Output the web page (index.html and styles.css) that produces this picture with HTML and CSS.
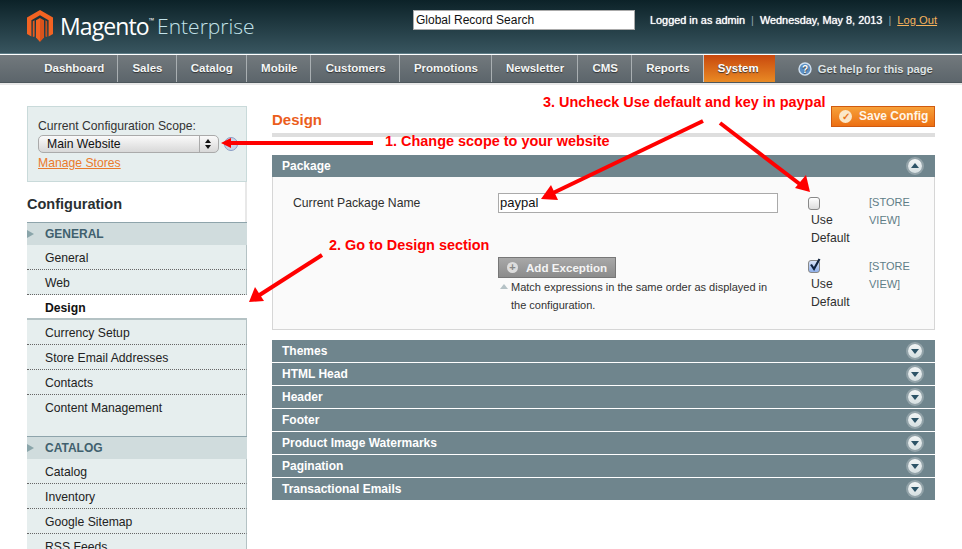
FILE: index.html
```html
<!DOCTYPE html>
<html lang="en">
<head>
    <meta charset="UTF-8">
    <meta name="viewport" content="width=device-width, initial-scale=1.0">
    <link rel="stylesheet" href="styles.css">
    <title>Magento Enterprise - Design Configuration</title>
</head>
<body>

<div id="page">

<header class="header">
    <svg class="logo-mark" width="26" height="32" viewBox="0 0 26 32">
        <path d="M13 0 L26 7.6 V24 L21.6 26.4 V10.2 L13 5.2 L4.4 10.2 V26.4 L0 24 V7.6 Z" fill="#f26322"/>
        <path d="M13 8 L9 10.3 V27.6 L13 32 Z" fill="#f26322"/>
        <path d="M13 8 L17 10.3 V27.6 L13 32 Z" fill="#d9531c"/>
        <path d="M5.8 11.2 L7.6 10.2 V26.6 L5.8 27 Z" fill="#e85a1e"/>
        <path d="M20.2 11.2 L18.4 10.2 V26.6 L20.2 27 Z" fill="#c94c18"/>
    </svg>
    <div class="logo-text"><span class="logo-name">Magento</span><sup class="logo-tm">&trade;</sup><span class="logo-edition">Enterprise</span></div>
    <div class="search-box">Global Record Search</div>
    <div class="user-info">
        <span>Logged in as admin</span>
        <span class="sep">|</span>
        <span>Wednesday, May 8, 2013</span>
        <span class="sep">|</span>
        <a href="#" class="logout">Log Out</a>
    </div>
</header>

<nav class="nav">
    <a href="#" class="nav-item">Dashboard</a>
    <a href="#" class="nav-item">Sales</a>
    <a href="#" class="nav-item">Catalog</a>
    <a href="#" class="nav-item">Mobile</a>
    <a href="#" class="nav-item">Customers</a>
    <a href="#" class="nav-item">Promotions</a>
    <a href="#" class="nav-item">Newsletter</a>
    <a href="#" class="nav-item">CMS</a>
    <a href="#" class="nav-item">Reports</a>
    <a href="#" class="nav-item nav-active">System</a>
    <a href="#" class="nav-help">
        <svg width="14" height="14" viewBox="0 0 14 14">
            <circle cx="7" cy="7" r="6" fill="#5b8fc4" stroke="#cfe0f0" stroke-width="1.4"/>
            <text x="7" y="10.5" text-anchor="middle" class="help-q">?</text>
        </svg>
        Get help for this page
    </a>
</nav>

<div class="content">
    <aside class="sidebar">
        <div class="scope">
            <div class="scope-label">Current Configuration Scope:</div>
            <div class="scope-row">
                <div class="scope-select">
                    <span class="scope-value">Main Website</span>
                    <span class="scope-arrows"></span>
                </div>
                <span class="scope-help"></span>
            </div>
            <a href="#" class="manage-stores">Manage Stores</a>
        </div>
        <h3 class="side-title">Configuration</h3>
        <div class="side-head">GENERAL</div>
        <ul class="side-list">
            <li>General</li>
            <li>Web</li>
            <li class="side-active">Design</li>
            <li>Currency Setup</li>
            <li>Store Email Addresses</li>
            <li>Contacts</li>
            <li class="side-last">Content Management</li>
        </ul>
        <div class="side-head">CATALOG</div>
        <ul class="side-list">
            <li>Catalog</li>
            <li>Inventory</li>
            <li>Google Sitemap</li>
            <li>RSS Feeds</li>
        </ul>
    </aside>

    <main class="main">
        <div class="title-row">
            <h3 class="main-title">Design</h3>
            <button class="save-btn"><span class="save-icon">&#10003;</span>Save Config</button>
        </div>
        <div class="section-head">Package<span class="toggle toggle-up"></span></div>
        <div class="panel">
            <div class="field">
                <div class="field-label">Current Package Name</div>
                <div class="field-value"><div class="text-input">paypal</div></div>
                <div class="field-default"><span class="check"></span>Use<br>Default</div>
                <div class="field-scope">[STORE VIEW]</div>
            </div>
            <div class="field field-second">
                <div class="field-label"></div>
                <div class="field-value">
                    <button class="add-btn"><span class="add-icon">+</span>Add Exception</button>
                    <p class="hint">Match expressions in the same order as displayed in the configuration.</p>
                </div>
                <div class="field-default">
                    <span class="check check-on">
                        <svg width="14" height="14" viewBox="0 0 14 14"><path d="M3 6.5 L6 11 L11.5 1" fill="none" stroke="#10233f" stroke-width="2.2"/></svg>
                    </span>Use<br>Default
                </div>
                <div class="field-scope">[STORE VIEW]</div>
            </div>
        </div>
        <div class="section-list">
            <div class="section-head">Themes<span class="toggle"></span></div>
            <div class="section-head">HTML Head<span class="toggle"></span></div>
            <div class="section-head">Header<span class="toggle"></span></div>
            <div class="section-head">Footer<span class="toggle"></span></div>
            <div class="section-head">Product Image Watermarks<span class="toggle"></span></div>
            <div class="section-head">Pagination<span class="toggle"></span></div>
            <div class="section-head">Transactional Emails<span class="toggle"></span></div>
        </div>
    </main>
</div>

<!-- red notes drawn over the screenshot -->
<svg class="arrows" width="962" height="549" viewBox="0 0 962 549">
    <g fill="none" stroke="#f00" stroke-width="4">
        <path d="M373 143 H228"/>
        <path d="M322 255 L258 296"/>
        <path d="M703 121 L553 193"/>
        <path d="M720 123 L801 185"/>
    </g>
    <g fill="#f00">
        <path d="M221 143 L231 138 V148 Z"/>
        <path d="M249 302 L255 287 L264 301 Z"/>
        <path d="M541 199 L551 185 L558 200 Z"/>
        <path d="M810 192 L795 188 L806 175 Z"/>
    </g>
</svg>
<div class="note note-one">1. Change scope to your website</div>
<div class="note note-two">2. Go to Design section</div>
<div class="note note-three">3. Uncheck Use default and key in paypal</div>

</div>

</body>
</html>
```

FILE: styles.css
```css
html, body {
    margin: 0;
    padding: 0;
}

body {
    font-family: "Liberation Sans", Arial, sans-serif;
    font-size: 12.2px;
    color: #2f2f2f;
    background-color: #fff;
}

#page {
    position: relative;
    height: 549px;
    overflow: hidden;
}

a {
    text-decoration: none;
}

/* header */
.header {
    display: flex;
    align-items: flex-start;
    height: 53px;
    padding-left: 27px;
    border-bottom: 1px solid #5f7d87;
    background: linear-gradient(#0c2228, #38555f);
    color: #fff;
}

.logo-mark {
    flex: none;
    margin-top: 10px;
}

.logo-text {
    display: flex;
    width: 353px;
    margin-left: 7px;
    margin-top: 11px;
    font-family: "Open Sans", sans-serif;
    font-size: 23px;
    line-height: 30px;
}

.logo-name {
    letter-spacing: -0.9px;
}

.logo-tm {
    margin: 0;
    font-size: 7px;
    line-height: 20px;
}

.logo-edition {
    margin-left: 3px;
    color: #c3e3ea;
    font-size: 21px;
    font-weight: 300;
}

.search-box {
    box-sizing: border-box;
    width: 222px;
    height: 20px;
    margin-top: 10px;
    padding-left: 2px;
    background-color: #fff;
    border: 1px solid #aaa;
    color: #111;
    font-size: 12px;
    line-height: 18px;
}

.user-info {
    display: flex;
    margin-top: 13px;
    margin-left: 15px;
    font-size: 10.9px;
    line-height: 14px;
    text-shadow: 0 0 1px #fff;
    white-space: nowrap;
}

.sep {
    margin: 0 6px;
    color: #8fa4ab;
    text-shadow: none;
}

.logout {
    color: #f6b25c;
    font-size: 11.2px;
    text-decoration: underline;
    text-shadow: none;
}

/* main menu */
.nav {
    display: flex;
    height: 27px;
    margin-top: 1px;
    padding-left: 30px;
    background: linear-gradient(#72797d, #5c656b);
    border-bottom: 1px solid #4d575c;
    box-shadow: 0 2px 0 #e8e8e8;
}

.nav-item {
    padding: 0 13px 0 14.2px;
    border-right: 1px solid #a9afb2;
    color: #f4f6f6;
    font-size: 11.5px;
    font-weight: bold;
    line-height: 27px;
    text-shadow: 0 1px 1px #333;
}

.nav-item:nth-child(9) {
    border-right: 1px solid #c4c8ca;
}

.nav-active {
    width: 44px;
    border-right: 0;
    background: linear-gradient(#c8480e, #e98a24);
    color: #fff;
}

.nav-help {
    display: flex;
    align-items: center;
    gap: 6px;
    margin-left: 23px;
    color: #dfe4e6;
    font-size: 11.2px;
    font-weight: bold;
    text-shadow: 0 1px 1px #333;
    white-space: nowrap;
}

.help-q {
    fill: #fff;
    font-family: "Liberation Sans", sans-serif;
    font-size: 10px;
    font-weight: bold;
}

/* page body */
.content {
    display: flex;
    padding: 23px 27px 0;
}

.sidebar {
    flex: none;
    width: 220px;
}

.scope {
    box-sizing: border-box;
    height: 76px;
    padding: 12px 0 0 10px;
    background-color: #e6eeee;
    border: 1px solid #c9dada;
    color: #333;
}

.scope-label {
    line-height: 14px;
}

.scope-row {
    display: flex;
    align-items: center;
    margin-top: 2px;
}

.scope-select {
    box-sizing: border-box;
    display: flex;
    justify-content: space-between;
    width: 181px;
    height: 18px;
    background: linear-gradient(#fafafa, #d8d8d8);
    border: 1px solid #aaa;
    border-radius: 5px;
}

.scope-value {
    padding-left: 8px;
    color: #111;
    line-height: 16px;
}

.scope-arrows {
    position: relative;
    width: 18px;
    border-left: 1px solid #aaa;
}

.scope-arrows::before,
.scope-arrows::after {
    content: "";
    position: absolute;
    left: 5px;
    border-left: 3.5px solid transparent;
    border-right: 3.5px solid transparent;
}

.scope-arrows::before {
    top: 3px;
    border-bottom: 4px solid #111;
}

.scope-arrows::after {
    bottom: 3px;
    border-top: 4px solid #111;
}

.scope-help {
    box-sizing: border-box;
    width: 14px;
    height: 14px;
    margin-left: 5px;
    background-color: #c9d3e6;
    border: 1px solid #8a9cc4;
    border-radius: 50%;
}

.manage-stores {
    display: inline-block;
    margin-top: 3px;
    color: #ea7a2c;
    text-decoration: underline;
    line-height: 14px;
}

.side-title {
    box-sizing: border-box;
    height: 40px;
    margin: 0;
    border-right: 2px solid #e8e8e8;
    color: #2a2f32;
    font-size: 14.5px;
    font-weight: bold;
    line-height: 44px;
}

.side-head {
    position: relative;
    height: 22px;
    padding-left: 18px;
    background-color: #d0dcdd;
    border-top: 1px solid #8ea4ab;
    color: #40606e;
    font-size: 12px;
    font-weight: bold;
    line-height: 22px;
}

.side-head::before {
    content: "";
    position: absolute;
    left: 0;
    top: 7px;
    border-left: 7px solid #8aa5aa;
    border-top: 4px solid transparent;
    border-bottom: 4px solid transparent;
}

.side-list {
    margin: 0;
    padding: 0;
    list-style: none;
}

.side-list li {
    box-sizing: border-box;
    height: 25px;
    padding-left: 18px;
    background-color: #e6eeee;
    border-right: 1px solid #b4c2c4;
    border-bottom: 1px dotted #666;
    color: #222;
    line-height: 26px;
}

.side-list .side-active {
    background-color: #fff;
    border-right: 0;
    border-bottom: 2px solid #b4c2c4;
    color: #111;
    font-weight: bold;
}

.side-list .side-last {
    height: 41px;
    border-bottom: 0;
}

.main {
    flex: 1;
    margin-left: 25px;
}

.title-row {
    display: flex;
    justify-content: space-between;
    height: 27px;
    margin-bottom: 18px;
    border-bottom: 4px solid #dedede;
}

.main-title {
    margin: 6px 0 0;
    color: #eb5e1c;
    font-size: 15px;
    font-weight: bold;
    line-height: 16px;
}

.save-btn {
    display: flex;
    align-items: center;
    width: 104px;
    height: 21px;
    padding: 0 0 1px 7px;
    background: linear-gradient(#f7a13a, #ec6f12);
    border: 1px solid #d05a10;
    color: #fff6e8;
    font-family: inherit;
    font-size: 12px;
    font-weight: bold;
}

.save-icon {
    width: 13px;
    height: 13px;
    margin-right: 7px;
    background-color: #fbe7c8;
    border-radius: 50%;
    color: #e8761c;
    font-size: 10px;
    line-height: 13px;
    text-align: center;
}

.section-head {
    position: relative;
    height: 22px;
    padding-left: 10px;
    background-color: #6f858d;
    color: #fff;
    font-size: 12px;
    font-weight: bold;
    line-height: 22px;
}

.section-list {
    display: flex;
    flex-direction: column;
    gap: 1px;
    margin-top: 10px;
}

.toggle {
    position: absolute;
    top: 4px;
    right: 13px;
    width: 14px;
    height: 14px;
    background: linear-gradient(#f2f5f5, #d5dfe1);
    border-radius: 50%;
    box-shadow: 0 0 0 2px rgba(255, 255, 255, 0.25);
}

.toggle::after {
    content: "";
    position: absolute;
    left: 3px;
    top: 5px;
    border-left: 4px solid transparent;
    border-right: 4px solid transparent;
    border-top: 5px solid #2c5366;
}

.toggle-up::after {
    top: 4px;
    border-top: 0;
    border-bottom: 5px solid #2c5366;
}

.panel {
    box-sizing: border-box;
    height: 153px;
    padding: 16px 0 0 20px;
    background-color: #fafafa;
    border: 1px solid #d6d6d6;
    border-top: 0;
}

.field {
    display: grid;
    grid-template-columns: 205px 310px 61px 1fr;
}

.field-second {
    margin-top: 10px;
}

.field-label {
    padding-top: 3px;
    line-height: 14px;
}

.text-input {
    box-sizing: border-box;
    width: 280px;
    height: 20px;
    padding-left: 1px;
    background-color: #fff;
    border: 1px solid #aaa;
    color: #111;
    font-size: 13px;
    line-height: 18px;
}

.field-default {
    margin-top: 4px;
    padding-left: 3px;
    line-height: 18px;
}

.field-second .field-default {
    margin-top: 3px;
}

.field-scope {
    width: 50px;
    color: #5f7d87;
    font-size: 11px;
    line-height: 18px;
}

.check {
    box-sizing: border-box;
    display: block;
    position: relative;
    width: 12px;
    height: 13px;
    margin: 0 0 1px -3px;
    background: linear-gradient(#fff, #ddd);
    border: 1px solid #888;
    border-radius: 3px;
}

.check-on {
    margin-bottom: 2px;
    background: linear-gradient(#d8e4fa, #8fb0ea);
}

.check-on svg {
    position: absolute;
    left: -1px;
    top: -3px;
}

.add-btn {
    display: flex;
    align-items: center;
    width: 118px;
    height: 21px;
    padding: 0 0 1px 8px;
    background: linear-gradient(#a8a8a8, #8c8c8c);
    border: 1px solid #777;
    color: #f4f4f4;
    font-family: inherit;
    font-size: 11.6px;
    font-weight: bold;
}

.add-icon {
    width: 11px;
    height: 11px;
    margin-right: 8px;
    background-color: #ddd;
    border-radius: 50%;
    color: #888;
    font-size: 11px;
    line-height: 11px;
    text-align: center;
}

.hint {
    position: relative;
    width: 265px;
    margin: 0;
    padding-left: 13px;
    color: #333;
    font-size: 11px;
    line-height: 18px;
}

.hint::before {
    content: "";
    position: absolute;
    left: 2px;
    top: 6px;
    border-left: 4px solid transparent;
    border-right: 4px solid transparent;
    border-bottom: 5px solid #b5c2c6;
}

/* annotations, laid over the page */
.arrows {
    position: absolute;
    left: 0;
    top: 0;
}

.note {
    position: absolute;
    color: #f00;
    font-size: 14.45px;
    font-weight: bold;
    line-height: 16px;
    white-space: nowrap;
}

.note-one {
    left: 385px;
    top: 133px;
}

.note-two {
    left: 329px;
    top: 237px;
}

.note-three {
    left: 543px;
    top: 94px;
}
```
